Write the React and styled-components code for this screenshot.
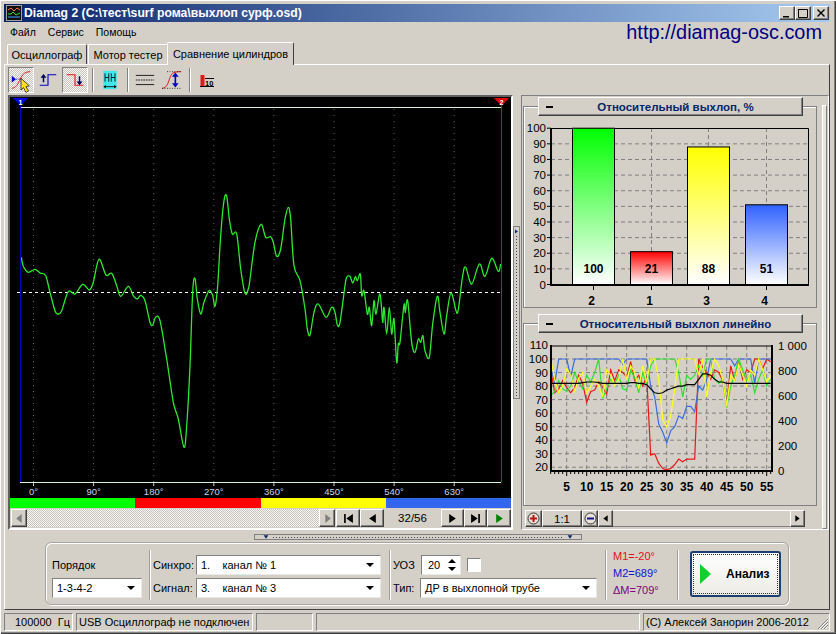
import React from "react";
import styled, { createGlobalStyle, css } from "styled-components";

const FONT = `"Liberation Sans", Arial, sans-serif`;
const FACE = "#d4d0c8";

const raised = css`
  background: ${FACE};
  border: 1px solid;
  border-color: #fff #404040 #404040 #fff;
  box-shadow: inset -1px -1px 0 #808080;
`;
const sunken = css`
  border: 1px solid;
  border-color: #808080 #fff #fff #808080;
`;
const dither = css`
  background: repeating-conic-gradient(#f6f6f6 0 25%, #c8c4bc 0 50%) 0 0 / 2px 2px;
`;

const GlobalStyle = createGlobalStyle`
  html, body { margin: 0; padding: 0; background: ${FACE}; }
  * { box-sizing: border-box; }
`;

const Window = styled.div`
  width: 836px;
  height: 634px;
  overflow: hidden;
  background: ${FACE};
  padding: 4px 6px 4px 4px;
  font: 11px ${FONT};
  color: #000;
  box-shadow: inset 1px 1px 0 #fff, inset -1px -1px 0 #404040, inset -2px -2px 0 #808080;
`;
const TitleBar = styled.div`
  height: 18px;
  width: 826px;
  display: flex;
  align-items: center;
  padding: 0 1px 0 2px;
  background: linear-gradient(90deg, #0a246a, #a6caf0);
`;
const AppIcon = styled.svg`
  width: 16px;
  height: 16px;
  margin-right: 2px;
`;
const TitleText = styled.span`
  flex: 1;
  color: #fff;
  font-weight: 700;
  font-size: 12.2px;
  white-space: nowrap;
`;
const CaptionButton = styled.div`
  ${raised}
  width: 16px;
  height: 14px;
  margin-left: ${(p) => p.$gap || 0}px;
  display: flex;
  align-items: center;
  justify-content: center;
`;
const MenuRow = styled.div`
  height: 20px;
  display: flex;
  align-items: center;
  padding: 0 8px 0 6px;
`;
const MenuItem = styled.span`
  margin-right: ${(p) => p.$gap}px;
  font-size: 10.5px;
`;
const UrlText = styled.span`
  margin-left: auto;
  color: #000080;
  font-size: 19.9px;
  line-height: 20px;
`;
const TabRow = styled.div`
  height: 22px;
  display: flex;
  align-items: flex-end;
  padding-left: 2px;
`;
const Tab = styled.div`
  height: ${(p) => (p.$active ? 23 : 20)}px;
  width: ${(p) => p.$width}px;
  margin-bottom: ${(p) => (p.$active ? -1 : 0)}px;
  margin-left: ${(p) => (p.$active ? -1 : 1)}px;
  display: flex;
  align-items: center;
  justify-content: center;
  white-space: nowrap;
  background: ${FACE};
  border: 1px solid;
  border-color: #fff #404040 transparent #fff;
  border-bottom: 0;
  border-radius: 2px 2px 0 0;
  position: relative;
  z-index: ${(p) => (p.$active ? 1 : 0)};
`;
const TabPanel = styled.div`
  width: 826px;
  height: 546px;
  border: 1px solid;
  border-color: #fff #404040 #404040 #fff;
`;
const Toolbar = styled.div`
  height: 30px;
  display: flex;
  align-items: flex-start;
  padding: 2px 0 0 3px;
`;
const ToolButton = styled.div`
  width: 26px;
  height: 26px;
  margin-right: 1px;
  display: flex;
  align-items: center;
  justify-content: center;
  border: 1px solid transparent;
  ${(p) =>
    p.$pressed &&
    css`
      ${dither}
      border-color: #808080 #fff #fff #808080;
    `}
`;
const ToolSep = styled.div`
  width: 2px;
  height: 24px;
  margin: 1px 3px 0 3px;
  border-left: 1px solid #808080;
  border-right: 1px solid #fff;
`;
const WorkRow = styled.div`
  height: 435px;
  display: flex;
  padding-left: 3px;
`;
const ScopeFrame = styled.div`
  width: 505px;
  border: 2px solid;
  border-color: #606060 #fff #fff #606060;
  display: flex;
  flex-direction: column;
`;
const ScopeCanvas = styled.svg`
  display: block;
  width: 501px;
  height: 401px;
`;
const ColorBar = styled.div`
  display: flex;
  height: 10px;
`;
const ColorCell = styled.div`
  flex: 1;
  background: ${(p) => p.$color};
`;
const ScrollRow = styled.div`
  height: 18px;
  margin-top: 1px;
  padding-left: 1px;
  display: flex;
`;
const ScrollTrack = styled.div`
  ${dither}
  flex: 1;
`;
const NavButton = styled.div`
  ${raised}
  width: ${(p) => p.$width}px;
  height: 18px;
  margin-left: ${(p) => p.$gap || 0}px;
  display: flex;
  align-items: center;
  justify-content: center;
`;
const Counter = styled.div`
  width: 57px;
  text-align: center;
  line-height: 18px;
  font-size: 11.5px;
`;
const VGripSlot = styled.div`
  width: 8px;
  display: flex;
  align-items: center;
`;
const VGrip = styled.div`
  width: 7px;
  height: 173px;
  background: ${FACE};
  border: 1px solid #808080;
  display: flex;
  flex-direction: column;
  align-items: center;
  padding-top: 2px;
`;
const GripDots = styled.div`
  flex: 1;
  width: 1px;
  margin: 2px 0;
  background: repeating-linear-gradient(180deg, #404060 0 1px, transparent 1px 3px);
`;
const RightFrame = styled.div`
  ${sunken}
  width: 308px;
  display: flex;
  padding: 0 1px 0 1px;
`;
const RightMain = styled.div`
  width: 294px;
`;
const Strip = styled.div`
  width: 5px;
  margin: 9px 0 0 5px;
  background: #e8e6e0;
  border: 1px solid;
  border-color: #fff #808080 #808080 #fff;
`;
const Group = styled.div`
  margin-top: ${(p) => p.$top}px;
  height: ${(p) => p.$height}px;
  border: 1px solid #808080;
  box-shadow: inset 1px 1px 0 #fff;
`;
const GroupHeader = styled.div`
  ${raised}
  width: 265px;
  height: 19px;
  margin: -10px 0 0 14px;
  display: flex;
  align-items: center;
  padding: 0 8px 0 7px;
  font-weight: 700;
  font-size: 11.5px;
  color: #0a246a;
`;
const Collapse = styled.div`
  width: 7px;
  height: 2px;
  background: #000;
`;
const HeaderText = styled.div`
  flex: 1;
  text-align: center;
  padding-left: 4px;
`;
const ChartSvg = styled.svg`
  display: block;
  width: 292px;
  height: ${(p) => p.$height}px;
`;
const ZoomRow = styled.div`
  height: 17px;
  margin: 4px 0 0 2px;
  display: flex;
  width: 280px;
`;
const ZoomButton = styled.div`
  ${raised}
  width: ${(p) => p.$width}px;
  display: flex;
  align-items: center;
  justify-content: center;
  font-size: 11.5px;
`;
const ZoomTrack = styled.div`
  flex: 1;
  background: ${FACE};
  border-top: 1px solid #fff;
  border-bottom: 1px solid #808080;
`;
const HSplitter = styled.div`
  width: 328px;
  height: 6px;
  margin: 4px 0 0 249px;
  border: 1px solid #808080;
  display: flex;
  align-items: center;
  gap: 4px;
  padding: 0 8px;
`;
const HDots = styled.div`
  flex: 1;
  height: 1px;
  background: repeating-linear-gradient(90deg, #404060 0 1px, transparent 1px 3px);
`;
const ControlBox = styled.div`
  width: 744px;
  height: 63px;
  margin: 2px 0 0 40px;
  border: 1px solid #a8a49c;
  border-radius: 6px;
  box-shadow: 1px 1px 0 #fff, inset 1px 1px 0 #fff;
  display: flex;
  padding: 12px 0 0 6px;
`;
const Column = styled.div`
  width: ${(p) => p.$width}px;
  display: flex;
  flex-direction: column;
  gap: 3px;
`;
const FieldRow = styled.div`
  height: 20px;
  display: flex;
  align-items: center;
`;
const FieldLabel = styled.div`
  width: ${(p) => p.$width}px;
  flex: none;
  white-space: nowrap;
`;
const Combo = styled.div`
  ${sunken}
  border-color: #808080 #e8e8e8 #e8e8e8 #808080;
  width: ${(p) => p.$width}px;
  height: 20px;
  flex: none;
  background: #fff;
  display: flex;
  align-items: center;
  padding: 0 6px 0 4px;
  white-space: pre;
`;
const ComboText = styled.span`
  flex: 1;
`;
const ComboArrow = styled.span`
  width: 0;
  height: 0;
  border-left: 4px solid transparent;
  border-right: 4px solid transparent;
  border-top: 4px solid #000;
`;
const Divider = styled.div`
  width: 2px;
  height: 50px;
  margin: -5px ${(p) => p.$right}px 0 ${(p) => p.$left}px;
  border-left: 1px solid #a09c94;
  border-right: 1px solid #fff;
`;
const SpinBox = styled(Combo)`
  padding: 0 4px 0 6px;
`;
const SpinArrows = styled.div`
  display: flex;
  flex-direction: column;
  gap: 4px;
`;
const SpinArrow = styled.span`
  width: 0;
  height: 0;
  border-left: 4px solid transparent;
  border-right: 4px solid transparent;
  ${(p) => (p.$down ? "border-top: 4px solid #000;" : "border-bottom: 4px solid #000;")}
`;
const CheckBox = styled.div`
  ${sunken}
  width: 14px;
  height: 14px;
  margin-left: 6px;
  background: #fff;
`;
const Marks = styled.div`
  width: 64px;
  margin-top: -6px;
  display: flex;
  flex-direction: column;
  gap: 3px;
`;
const Mark = styled.div`
  height: 14px;
  line-height: 14px;
  color: ${(p) => p.$color};
`;
const AnalyzeButton = styled.div`
  width: 91px;
  height: 46px;
  margin: -4px 0 0 11px;
  border: 2px solid #1c3f72;
  border-radius: 3px;
  background: linear-gradient(180deg, #fff, #ecebe4);
  position: relative;
  display: flex;
  align-items: center;
  padding-left: 8px;
  font-weight: 700;
  font-size: 12px;
  &::after {
    content: "";
    position: absolute;
    inset: 1px;
    border: 1px dotted #333;
  }
`;
const AnalyzeText = styled.span`
  margin-left: 14px;
`;
const StatusBar = styled.div`
  height: 18px;
  margin-top: 3px;
  display: flex;
  gap: 3px;
`;
const StatusCell = styled.div`
  ${sunken}
  width: ${(p) => p.$width}px;
  flex: ${(p) => (p.$grow ? 1 : "none")};
  display: flex;
  align-items: center;
  justify-content: ${(p) => (p.$right ? "flex-end" : "flex-start")};
  padding: 0 2px;
  white-space: pre;
  position: relative;
`;
const SizeGrip = styled.svg`
  position: absolute;
  right: 0;
  bottom: 0;
  width: 13px;
  height: 13px;
`;

// original trace read off the picture, two halves in crop coordinates
const traceA = [[64,235],[70,262],[85,280],[105,271],[120,282],[137,290],[150,340],[165,395],[175,405],[185,395],[205,338],[225,345],[248,316],[268,333],[280,310],[297,241],[318,288],[335,283],[350,320],[362,352],[385,322],[400,350],[412,360],[422,349],[435,365],[450,430],[458,438],[467,415],[480,425],[500,540],[520,670],[535,720],[552,805],[560,740],[570,560],[578,340],[585,298],[592,360],[602,405],[612,370],[627,335],[638,350],[645,382],[653,320],[662,170],[672,65],[680,52],[688,120],[697,165],[710,165],[722,270],[735,343],[745,330]];
const traceB = [[0,300],[15,190],[33,136],[47,175],[62,173],[70,190],[80,232],[92,210],[105,120],[115,85],[122,120],[132,260],[150,305],[165,390],[172,450],[180,468],[192,400],[205,375],[228,415],[245,385],[255,400],[262,437],[270,430],[285,320],[290,295],[300,292],[308,312],[316,293],[322,305],[331,285],[335,350],[342,335],[352,405],[358,385],[365,440],[372,365],[378,405],[390,345],[398,430],[402,385],[410,465],[418,385],[425,465],[432,420],[440,550],[445,495],[450,490],[462,378],[466,400],[473,365],[485,490],[495,520],[505,480],[512,490],[519,470],[525,515],[538,535],[548,435],[562,352],[570,400],[582,465],[590,410],[603,342],[618,395],[625,392],[638,290],[647,265],[665,315],[688,255],[705,292],[725,238],[745,277],[752,255]];
const tracePoints = [
  ...traceA.map(([x, y]) => [x / 3, 180 + y / 3]),
  ...traceB.map(([x, y]) => [250 + x / 3, 180 + y / 3]),
];

// catmull-rom through the points, the picture's trace has round peaks
function smoothPath(pts) {
  let d = `M${pts[0][0].toFixed(1)} ${pts[0][1].toFixed(1)}`;
  for (let i = 0; i < pts.length - 1; i++) {
    const p0 = pts[Math.max(i - 1, 0)];
    const p1 = pts[i];
    const p2 = pts[i + 1];
    const p3 = pts[Math.min(i + 2, pts.length - 1)];
    const c1 = [p1[0] + (p2[0] - p0[0]) / 6, p1[1] + (p2[1] - p0[1]) / 6];
    const c2 = [p2[0] - (p3[0] - p1[0]) / 6, p2[1] - (p3[1] - p1[1]) / 6];
    d += ` C${c1[0].toFixed(1)} ${c1[1].toFixed(1)} ${c2[0].toFixed(1)} ${c2[1].toFixed(1)} ${p2[0].toFixed(1)} ${p2[1].toFixed(1)}`;
  }
  return d;
}

const degrees = [0, 90, 180, 270, 360, 450, 540, 630];
const degX = (i) => 33.5 + i * 60.1;

function Scope() {
  return (
    <ScopeCanvas viewBox="10 98 501 401">
      <rect x="10" y="98" width="501" height="401" fill="#000" />
      {degrees.map((d, i) => (
        <g key={d}>
          <line x1={degX(i)} x2={degX(i)} y1="110" y2="483" stroke="#666" strokeDasharray="1 5" />
          <line x1={degX(i)} x2={degX(i)} y1="483" y2="487" stroke="#ccc" />
          <text x={degX(i)} y="496" fill="#c4d4e8" fontSize="9.5" fontFamily="Liberation Sans" textAnchor="middle">
            {d}°
          </text>
        </g>
      ))}
      <line x1="20" x2="501" y1="108.5" y2="108.5" stroke="#dcf0dc" />
      <line x1="20" x2="501" y1="483.5" y2="483.5" stroke="#dcf0dc" />
      <line x1="17" x2="501" y1="293.5" y2="293.5" stroke="#fff" strokeDasharray="3 3" />
      <path d={smoothPath(tracePoints)} fill="none" stroke="#2ee82e" strokeWidth="1.3" />
      <line x1="20.5" x2="20.5" y1="100" y2="483" stroke="#0000c0" />
      <line x1="501.5" x2="501.5" y1="100" y2="483" stroke="#c01818" />
      <polygon points="13,99 28,99 20.5,107" fill="#0000e0" />
      <polygon points="494,99 509,99 501.5,107" fill="#e00000" />
      <text x="20.5" y="106" fill="#fff" fontSize="7" fontWeight="700" fontFamily="Liberation Sans" textAnchor="middle">1</text>
      <text x="501.5" y="106" fill="#fff" fontSize="7" fontWeight="700" fontFamily="Liberation Sans" textAnchor="middle">2</text>
    </ScopeCanvas>
  );
}

const bars = [
  { name: "2", value: 100, x: 572.5, top: "#00ff00", id: "barGreen" },
  { name: "1", value: 21, x: 630.5, top: "#ff0000", id: "barRed" },
  { name: "3", value: 88, x: 687.5, top: "#ffff00", id: "barYellow" },
  { name: "4", value: 51, x: 745.5, top: "#2f62ff", id: "barBlue" },
];
const barY = (v) => 285.5 - v * 1.563;
const chartText = { fontFamily: "Liberation Sans", fontSize: 11.5 };
const boldText = { fontFamily: "Liberation Sans", fontSize: 12, fontWeight: 700 };

function BarChart() {
  const levels = [0, 10, 20, 30, 40, 50, 60, 70, 80, 90, 100];
  return (
    <ChartSvg $height={190} viewBox="524 117 292 190">
      <defs>
        {bars.map((b) => (
          <linearGradient key={b.id} id={b.id} x1="0" y1="0" x2="0" y2="1">
            <stop offset="0" stopColor={b.top} />
            <stop offset="1" stopColor="#fff" />
          </linearGradient>
        ))}
      </defs>
      {levels.slice(1, -1).map((v) => (
        <line key={v} x1="551" x2="808" y1={barY(v)} y2={barY(v)} stroke="#808080" strokeDasharray="4 3" />
      ))}
      {[593.5, 651.5, 708.5, 766.5].map((x) => (
        <line key={x} x1={x} x2={x} y1="129" y2="285" stroke="#808080" strokeDasharray="4 3" />
      ))}
      {levels.map((v) => (
        <g key={v}>
          <text x="546" y={barY(v) + 4} textAnchor="end" style={chartText}>{v}</text>
          <line x1="547" x2="551" y1={barY(v)} y2={barY(v)} stroke="#000" />
        </g>
      ))}
      <line x1="551" x2="808.5" y1="129.5" y2="129.5" stroke="#000" />
      <line x1="808.5" x2="808.5" y1="129.5" y2="286" stroke="#000" />
      <line x1="551" x2="551" y1="129" y2="287" stroke="#000" strokeWidth="2" />
      <line x1="550" x2="809" y1="286" y2="286" stroke="#000" strokeWidth="2" />
      {bars.map((b) => (
        <g key={b.name}>
          <rect x={b.x} y={barY(b.value)} width="42" height={285.5 - barY(b.value)} fill={`url(#${b.id})`} stroke="#000" />
          <text x={b.x + 21} y="274" textAnchor="middle" style={boldText}>{b.value}</text>
          <line x1={b.x + 21} x2={b.x + 21} y1="286" y2="291" stroke="#000" />
          <text x={b.x + 19} y="305.5" textAnchor="middle" style={boldText}>{b.name}</text>
        </g>
      ))}
    </ChartSvg>
  );
}

const series = [
  { color: "#e81818", data: [92,75,78,84,79,75,79,88,82,68,76,77,83,79,74,92,84,92,90,87,98,84,88,80,87,29,30,23,19,18,19,22,26,24,26,26,26,100,94,90,85,92,90,84,66,95,84,98,85,92,90,100,100,93,100,98] },
  { color: "#3a6ce0", data: [95,82,100,100,100,87,100,100,100,100,100,100,100,100,100,100,100,100,96,100,100,100,100,100,100,80,72,52,46,38,47,50,58,56,65,65,61,80,77,85,100,100,100,100,100,100,95,100,100,100,100,82,100,100,100,100] },
  { color: "#30e030", data: [73,76,84,78,76,80,90,83,78,88,83,90,100,71,78,85,82,88,78,77,92,86,75,90,82,95,100,100,100,100,100,100,90,72,88,85,88,95,88,100,100,85,82,85,64,80,88,100,92,84,88,75,85,92,80,85] },
  { color: "#ffff20", data: [100,85,75,80,93,88,76,86,90,75,80,85,80,72,92,88,80,85,100,85,95,90,78,95,83,100,100,85,55,50,58,78,100,100,100,100,100,88,100,72,90,100,95,85,65,88,84,96,88,80,92,88,100,92,83,88] },
  { color: "#000", data: [82,82,82,82,82,82,82,82,82.5,83,83,83,82.5,82,82,82,82,82,82,82,82.5,82.5,82,82,81,78,75,74.5,75,77,78,79,80,80,81,81,81,85,89,89,88,85,83,83,82,82,82,82,82,82,82,82,82,82,82,82] },
];
const lineX = (i) => 550.7 + i * 4;
const lineY = (v) => 360 + (100 - v) * 1.353;
const leftLevels = [110, 100, 90, 80, 70, 60, 50, 40, 30, 20];
const rightLevels = ["1 000", "800", "600", "400", "200", "0"];

function LineChart() {
  const cats = [5, 10, 15, 20, 25, 30, 35, 40, 45, 50, 55];
  return (
    <ChartSvg $height={172} viewBox="524 334 292 172">
      {leftLevels.slice(1).map((v) => (
        <line key={v} x1="551" x2="771" y1={lineY(v)} y2={lineY(v)} stroke="#808080" strokeDasharray="4 3" />
      ))}
      {cats.map((c) => (
        <line key={c} x1={lineX(c - 1)} x2={lineX(c - 1)} y1="347" y2="471" stroke="#808080" strokeDasharray="4 3" />
      ))}
      {series.map((s) => (
        <polyline
          key={s.color}
          points={s.data.map((v, i) => `${lineX(i)},${lineY(v).toFixed(1)}`).join(" ")}
          fill="none"
          stroke={s.color}
          strokeWidth="1.2"
        />
      ))}
      <line x1="551" x2="772" y1="347" y2="347" stroke="#000" />
      <line x1="551" x2="551" y1="346" y2="473" stroke="#000" strokeWidth="2" />
      <line x1="772" x2="772" y1="346" y2="473" stroke="#000" strokeWidth="2" />
      <line x1="550" x2="773" y1="472" y2="472" stroke="#000" strokeWidth="2" />
      {series[0].data.map((_, i) => (
        <line key={i} x1={lineX(i)} x2={lineX(i)} y1="472" y2={(i + 1) % 5 === 0 ? 477 : 475} stroke="#000" />
      ))}
      {leftLevels.map((v) => (
        <text key={v} x="548" y={lineY(v) + 4} textAnchor="end" style={chartText}>{v}</text>
      ))}
      {rightLevels.map((t, i) => (
        <text key={t} x="778" y={346.5 + i * 25 + 4} style={chartText}>{t}</text>
      ))}
      {cats.map((c) => (
        <text key={c} x={lineX(c - 1)} y="492" textAnchor="middle" style={boldText}>{c}</text>
      ))}
    </ChartSvg>
  );
}

const Icon = ({ children, size = 20 }) => (
  <svg width={size} height={size} viewBox="0 0 24 24" overflow="visible">{children}</svg>
);

function ToolbarIcons() {
  return (
    <Toolbar>
      <ToolButton $pressed>
        <Icon>
          <path d="M1 22 C8 21 9 14 12 9 C14 5 17 2 23 2" fill="none" stroke="#e02020" strokeWidth="1.2" />
          <path d="M1 7 L6 11 L1 15 Z" fill="#0000c0" />
          <path d="M6 11 H14" stroke="#0000c0" strokeDasharray="1 1" />
          <path d="M12 10 L12 24 L15 21 L18 27 L21 25 L18 20 L22 19 Z" fill="#ffe020" stroke="#000" strokeWidth="0.8" />
        </Icon>
      </ToolButton>
      <ToolButton>
        <Icon size={18}>
          <path d="M1 19 H12 V5 H23" fill="none" stroke="#0000c0" strokeWidth="1.5" />
          <path d="M6 4 L2 9 H5 V15 H7 V9 H10 Z" fill="#000060" />
        </Icon>
      </ToolButton>
      <ToolButton $pressed>
        <Icon size={18}>
          <path d="M1 5 H12 V19 H23" fill="none" stroke="#e01818" strokeWidth="1.5" />
          <path d="M18 19 L14 14 H17 V7 H19 V14 H22 Z" fill="#000060" />
        </Icon>
      </ToolButton>
      <ToolSep />
      <ToolButton>
        <Icon>
          <rect x="4" y="1" width="16" height="22" fill="#40e8e8" />
          <path d="M6 4 V14 M6 9 H10.5 M10.5 4 V14 M13.5 4 V14 M13.5 9 H18 M18 4 V14" stroke="#000" fill="none" />
          <path d="M5 20 H19" stroke="#000" />
          <path d="M4 20 L7 18 V22 Z M20 20 L17 18 V22 Z" fill="#000" />
        </Icon>
      </ToolButton>
      <ToolSep />
      <ToolButton>
        <Icon>
          <path d="M1 6.5 H23 M1 17.5 H23" stroke="#000" />
          <path d="M1 12 H23" stroke="#000" strokeDasharray="2 1" />
        </Icon>
      </ToolButton>
      <ToolButton>
        <Icon>
          <path d="M0 22 C7 22 8 12 10 8 C12 3 15 2 23 2" fill="none" stroke="#e01818" strokeWidth="1.2" />
          <path d="M6 2 H22 M0 22 H22" stroke="#000" strokeDasharray="1 2" />
          <path d="M16 3 L12 8 H15 V16 H12 L16 21 L20 16 H17 V8 H20 Z" fill="#0000c0" />
        </Icon>
      </ToolButton>
      <ToolSep />
      <ToolButton>
        <svg width="15" height="15" viewBox="0 0 15 15">
          <rect x="0.5" y="2" width="4" height="11" fill="#e01818" />
          <path d="M0 13.5 H14 M5 5.5 H14" stroke="#000" />
          <text x="5" y="12.5" fontSize="7.5" fontWeight="700" fontFamily="Liberation Sans">10</text>
        </svg>
      </ToolButton>
    </Toolbar>
  );
}

const Nav = ({ d, fill = "#000", size = 11 }) => (
  <svg width={size} height={size} viewBox="0 0 10 10">
    <path d={d} fill={fill} />
  </svg>
);

export default function App() {
  return (
    <>
      <GlobalStyle />
      <Window>
        <TitleBar>
          <AppIcon viewBox="0 0 16 16">
            <rect x="0.5" y="0.5" width="15" height="15" fill="#101010" stroke="#a0a0a0" />
            <path d="M2 5 L5 3 L8 6 L11 3 L14 5" stroke="#ff7050" fill="none" />
            <path d="M2 9 H5 L7 7 L10 10 L14 8" stroke="#30e030" fill="none" />
            <path d="M2 12 H14" stroke="#40a0ff" />
          </AppIcon>
          <TitleText>Diamag 2 (C:\тест\surf рома\выхлоп сурф.osd)</TitleText>
          <CaptionButton>
            <svg width="10" height="10"><path d="M1 8 H7 V9.5 H1 Z" /></svg>
          </CaptionButton>
          <CaptionButton>
            <svg width="10" height="10"><path d="M0.5 1.5 H9.5 V9.5 H0.5 Z M0.5 1 V2" fill="none" stroke="#000" /></svg>
          </CaptionButton>
          <CaptionButton $gap={2}>
            <svg width="10" height="10"><path d="M1.5 1.5 L8.5 8.5 M8.5 1.5 L1.5 8.5" stroke="#000" strokeWidth="1.4" /></svg>
          </CaptionButton>
        </TitleBar>
        <MenuRow>
          <MenuItem $gap={12}>Файл</MenuItem>
          <MenuItem $gap={12}>Сервис</MenuItem>
          <MenuItem $gap={0}>Помощь</MenuItem>
          <UrlText>http://diamag-osc.com</UrlText>
        </MenuRow>
        <TabRow>
          <Tab $width={80}>Осциллограф</Tab>
          <Tab $width={80}>Мотор тестер</Tab>
          <Tab $active $width={127}>Сравнение цилиндров</Tab>
        </TabRow>
        <TabPanel>
          <ToolbarIcons />
          <WorkRow>
            <ScopeFrame>
              <Scope />
              <ColorBar>
                <ColorCell $color="#00ff00" />
                <ColorCell $color="#ff0000" />
                <ColorCell $color="#ffff00" />
                <ColorCell $color="#3366ee" />
              </ColorBar>
              <ScrollRow>
                <NavButton $width={16}><Nav d="M7 1 L2 5 L7 9 Z" fill="#808080" /></NavButton>
                <ScrollTrack />
                <NavButton $width={16}><Nav d="M3 1 L8 5 L3 9 Z" fill="#808080" /></NavButton>
                <NavButton $width={24} $gap={1}><Nav d="M1 1 H2.5 V9 H1 Z M9 1 V9 L3 5 Z" /></NavButton>
                <NavButton $width={24}><Nav d="M8 1 V9 L2 5 Z" /></NavButton>
                <Counter>32/56</Counter>
                <NavButton $width={23}><Nav d="M2 1 V9 L8 5 Z" /></NavButton>
                <NavButton $width={23}><Nav d="M1 1 V9 L7 5 Z M7.5 1 H9 V9 H7.5 Z" /></NavButton>
                <NavButton $width={24}><Nav d="M2 1 V9 L8 5 Z" fill="#008000" /></NavButton>
              </ScrollRow>
            </ScopeFrame>
            <VGripSlot>
              <VGrip>
                <Nav d="M2 1 L8 5 L2 9 Z" fill="#0a246a" size={5} />
                <GripDots />
              </VGrip>
            </VGripSlot>
            <RightFrame>
              <RightMain>
                <Group $top={10} $height={202}>
                  <GroupHeader>
                    <Collapse />
                    <HeaderText>Относительный выхлоп, %</HeaderText>
                  </GroupHeader>
                  <BarChart />
                </Group>
                <Group $top={15} $height={183}>
                  <GroupHeader>
                    <Collapse />
                    <HeaderText>Относительный выхлоп линейно</HeaderText>
                  </GroupHeader>
                  <LineChart />
                </Group>
                <ZoomRow>
                  <ZoomButton $width={17}>
                    <svg width="13" height="13" viewBox="0 0 13 13">
                      <circle cx="6.5" cy="6.5" r="5.5" fill="#e8e4dc" stroke="#333" />
                      <path d="M3 6.5 H10 M6.5 3 V10" stroke="#c01010" strokeWidth="2" />
                    </svg>
                  </ZoomButton>
                  <ZoomButton $width={40}>1:1</ZoomButton>
                  <ZoomButton $width={16}>
                    <svg width="13" height="13" viewBox="0 0 13 13">
                      <circle cx="6.5" cy="6.5" r="5.5" fill="#e8e4dc" stroke="#333" />
                      <path d="M3 6.5 H10" stroke="#101080" strokeWidth="2" />
                    </svg>
                  </ZoomButton>
                  <ZoomButton $width={15}><Nav d="M7 2 L3 5 L7 8 Z" /></ZoomButton>
                  <ZoomTrack />
                  <ZoomButton $width={15}><Nav d="M3 2 L7 5 L3 8 Z" /></ZoomButton>
                </ZoomRow>
              </RightMain>
              <Strip />
            </RightFrame>
          </WorkRow>
          <HSplitter>
            <Nav d="M1 2 H9 L5 8 Z" fill="#0a246a" size={6} />
            <HDots />
            <Nav d="M1 2 H9 L5 8 Z" fill="#0a246a" size={6} />
          </HSplitter>
          <ControlBox>
            <Column $width={90}>
              <FieldRow>Порядок</FieldRow>
              <Combo $width={90}><ComboText>1-3-4-2</ComboText><ComboArrow /></Combo>
            </Column>
            <Divider $left={7} $right={2} />
            <Column $width={228}>
              <FieldRow>
                <FieldLabel $width={43}>Синхро:</FieldLabel>
                <Combo $width={185}><ComboText>1.    канал № 1</ComboText><ComboArrow /></Combo>
              </FieldRow>
              <FieldRow>
                <FieldLabel $width={43}>Сигнал:</FieldLabel>
                <Combo $width={185}><ComboText>3.    канал № 3</ComboText><ComboArrow /></Combo>
              </FieldRow>
            </Column>
            <Divider $left={8} $right={2} />
            <Column $width={204}>
              <FieldRow>
                <FieldLabel $width={28}>УОЗ</FieldLabel>
                <SpinBox $width={40}>
                  <ComboText>20</ComboText>
                  <SpinArrows><SpinArrow /><SpinArrow $down /></SpinArrows>
                </SpinBox>
                <CheckBox />
              </FieldRow>
              <FieldRow>
                <FieldLabel $width={27}>Тип:</FieldLabel>
                <Combo $width={177}><ComboText>ДР в выхлопной трубе</ComboText><ComboArrow /></Combo>
              </FieldRow>
            </Column>
            <Divider $left={8} $right={6} />
            <Marks>
              <Mark $color="#e01010">M1=-20°</Mark>
              <Mark $color="#1010d0">M2=689°</Mark>
              <Mark $color="#800080">ΔM=709°</Mark>
            </Marks>
            <Divider $left={0} $right={0} />
            <AnalyzeButton>
              <svg width="12" height="20" viewBox="0 0 12 20"><path d="M0 0 L11 10 L0 20 Z" fill="#10d030" /></svg>
              <AnalyzeText>Анализ</AnalyzeText>
            </AnalyzeButton>
          </ControlBox>
        </TabPanel>
        <StatusBar>
          <StatusCell $width={69} $right>100000  Гц</StatusCell>
          <StatusCell $width={177}>USB Осциллограф не подключен</StatusCell>
          <StatusCell $width={57} />
          <StatusCell $width={324} />
          <StatusCell $grow>
            (C) Алексей Занорин 2006-2012
            <SizeGrip viewBox="0 0 13 13">
              <path d="M12 2 L2 12 M12 5 L5 12 M12 8 L8 12" stroke="#808080" />
              <path d="M12 3 L3 12 M12 6 L6 12 M12 9 L9 12" stroke="#fff" />
            </SizeGrip>
          </StatusCell>
        </StatusBar>
      </Window>
    </>
  );
}
